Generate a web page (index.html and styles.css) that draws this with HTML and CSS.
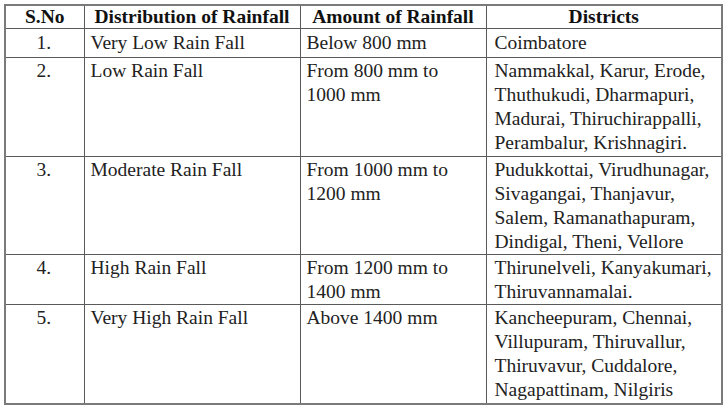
FILE: index.html
```html
<!DOCTYPE html>
<html>
<head>
<meta charset="utf-8">
<link rel="stylesheet" href="styles.css">
</head>
<body>
<table class="rain">
  <colgroup>
    <col class="c-sno">
    <col class="c-dist">
    <col class="c-amt">
    <col class="c-districts">
  </colgroup>
  <thead>
    <tr class="r-head">
      <th>S.No</th>
      <th>Distribution of Rainfall</th>
      <th>Amount of Rainfall</th>
      <th>Districts</th>
    </tr>
  </thead>
  <tbody>
    <tr class="r-1">
      <td class="num">1.</td>
      <td>Very Low Rain Fall</td>
      <td>Below 800 mm</td>
      <td>Coimbatore</td>
    </tr>
    <tr class="r-4l">
      <td class="num">2.</td>
      <td>Low Rain Fall</td>
      <td>From 800 mm to<br>1000 mm</td>
      <td>Nammakkal, Karur, Erode,<br>Thuthukudi, Dharmapuri,<br>Madurai, Thiruchirappalli,<br>Perambalur, Krishnagiri.</td>
    </tr>
    <tr class="r-4s">
      <td class="num">3.</td>
      <td>Moderate Rain Fall</td>
      <td>From 1000 mm to<br>1200 mm</td>
      <td>Pudukkottai, Virudhunagar,<br>Sivagangai, Thanjavur,<br>Salem, Ramanathapuram,<br>Dindigal, Theni, Vellore</td>
    </tr>
    <tr class="r-2l">
      <td class="num">4.</td>
      <td>High Rain Fall</td>
      <td>From 1200 mm to<br>1400 mm</td>
      <td>Thirunelveli, Kanyakumari,<br>Thiruvannamalai.</td>
    </tr>
    <tr class="r-4l">
      <td class="num">5.</td>
      <td>Very High Rain Fall</td>
      <td>Above 1400 mm</td>
      <td>Kancheepuram, Chennai,<br>Villupuram, Thiruvallur,<br>Thiruvavur, Cuddalore,<br>Nagapattinam, Nilgiris</td>
    </tr>
  </tbody>
</table>
</body>
</html>
```

FILE: styles.css
```css
html, body {
  margin: 0;
  padding: 0;
  background: #ffffff;
}

body {
  padding: 4px 0 0 4px;
  font-family: "Liberation Serif", "Times New Roman", serif;
  color: #222222;
}

.rain {
  border-collapse: collapse;
  table-layout: fixed;
  width: 717px;
  border: 2px solid #7a7a7a;
}

.c-sno { width: 79px; }
.c-dist { width: 216px; }
.c-amt { width: 186px; }
.c-districts { width: 236px; }

.rain th,
.rain td {
  border: 1px solid #5a5a5a;
  font-family: "Liberation Serif", "Times New Roman", serif;
  font-size: 19.5px;
  line-height: 24px;
  vertical-align: top;
  text-align: left;
  padding: 1px 6px 0 6px;
}

.rain td:last-child {
  padding-left: 8px;
}

.rain th {
  font-weight: bold;
  text-align: center;
  padding: 0 4px;
  color: #111111;
}

.rain td.num {
  text-align: center;
  padding-left: 4px;
}

.r-head { height: 22px; }
.r-head th { line-height: 22px; }
.r-1 { height: 29px; }
.r-1 td { padding-top: 2px; }
.r-4l { height: 99px; }
.r-4s { height: 97px; }
.r-2l { height: 50px; }
```
